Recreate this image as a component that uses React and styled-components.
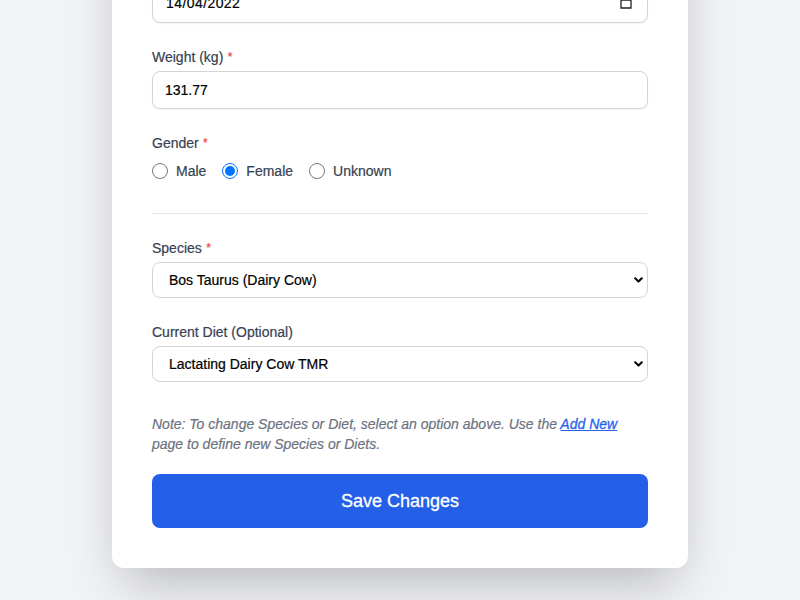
import React from "react";
import styled, { createGlobalStyle } from "styled-components";

const GlobalStyle = createGlobalStyle`
  *, *::before, *::after { box-sizing: border-box; }
  html, body { margin: 0; height: 100%; overflow: hidden; background: #f2f3f5; }
  body {
    font-family: "Liberation Sans", Arial, sans-serif;
    color: #374151;
    -webkit-text-stroke: 0.2px currentColor;
  }
`;

const Page = styled.main`
  display: flex;
  justify-content: center;
  align-items: flex-end;
  height: 600px;
  padding-bottom: 32px;
  overflow: hidden;
  background: #f2f3f5;
`;

const Card = styled.form`
  flex: none;
  display: flex;
  flex-direction: column;
  width: 576px;
  height: 700px;
  padding: 0 40px 40px;
  justify-content: flex-end;
  background: #fff;
  border-radius: 12px;
  box-shadow: 0 25px 50px -12px rgba(0, 0, 0, 0.25);
`;

const Field = styled.div`
  display: flex;
  flex-direction: column;
  margin-bottom: ${(p) => p.$gap}px;
`;

const Label = styled.span`
  font-size: 14px;
  line-height: 20px;
  color: #374151;
  margin-bottom: 4px;
`;

const Required = styled.span`
  display: inline-block;
  font-size: 12px;
  line-height: 12px;
  vertical-align: top;
  padding: 4px 0 0 0.5px;
  color: #ef4444;
`;

const InputBox = styled.div`
  display: flex;
  align-items: center;
  justify-content: space-between;
  height: 38px;
  padding: 0 12px;
  font-size: 14px;
  color: #000;
  background: #fff;
  border: 1px solid #d1d5db;
  border-radius: 8px;
  box-shadow: 0 1px 2px rgba(0, 0, 0, 0.05);
`;

const DateBox = styled(InputBox)`
  height: 40px;
  padding: 0 15px 0 13px;
  letter-spacing: 0.42px;
`;

const SelectBox = styled(InputBox)`
  height: 36px;
  padding: 0 4px 0 16px;
  box-shadow: none;
`;

const RadioGroup = styled.div`
  display: flex;
  gap: 16px;
  margin-top: 4px;
`;

const RadioLabel = styled.label`
  display: flex;
  align-items: center;
  gap: 8px;
  font-size: 14px;
  line-height: 20px;
`;

const Dot = styled.span`
  display: grid;
  place-items: center;
  width: 16px;
  height: 16px;
  border-radius: 50%;
  border: 1px solid ${(p) => (p.$on ? "#0075ff" : "#767676")};
  background: #fff;
  &::after {
    content: "";
    width: 10px;
    height: 10px;
    border-radius: 50%;
    background: ${(p) => (p.$on ? "#0075ff" : "transparent")};
  }
`;

const Divider = styled.div`
  height: 1px;
  background: #e5e7eb;
  margin-bottom: 24px;
`;

const Note = styled.p`
  margin: 0 0 20px;
  font-size: 14px;
  line-height: 20px;
  font-style: italic;
  color: #6b7280;
`;

const NoteLink = styled.a`
  color: #2563eb;
  text-decoration: underline;
  -webkit-text-stroke: 0.3px currentColor;
`;

const SaveButton = styled.button`
  height: 54px;
  border: 0;
  border-radius: 8px;
  background: #2460e7;
  color: #fff;
  font: 18px/28px "Liberation Sans", Arial, sans-serif;
  -webkit-text-stroke: 0.3px currentColor;
`;

const Chevron = () => (
  <svg width="9" height="6" viewBox="0 0 9 6" fill="none" stroke="#000" strokeWidth="2" strokeLinecap="round" strokeLinejoin="round">
    <path d="M1.2 1.2l3.3 3.3 3.3-3.3" />
  </svg>
);

const CalendarIcon = () => (
  <svg width="12" height="13" viewBox="0 0 12 13" fill="none" stroke="#222" strokeWidth="1.3">
    <path d="M1 1.2h10v9.8H1z M1 3h10" />
  </svg>
);

const genders = ["Male", "Female", "Unknown"];

export default function App() {
  return (
    <>
      <GlobalStyle />
      <Page>
        <Card>
          <Field $gap={24}>
            <DateBox>14/04/2022 <CalendarIcon /></DateBox>
          </Field>
          <Field $gap={24}>
            <Label>Weight (kg) <Required>*</Required></Label>
            <InputBox>131.77</InputBox>
          </Field>
          <Field $gap={32}>
            <Label>Gender <Required>*</Required></Label>
            <RadioGroup>
              {genders.map((g) => (
                <RadioLabel key={g}><Dot $on={g === "Female"} />{g}</RadioLabel>
              ))}
            </RadioGroup>
          </Field>
          <Divider />
          <Field $gap={24}>
            <Label>Species <Required>*</Required></Label>
            <SelectBox>Bos Taurus (Dairy Cow)<Chevron /></SelectBox>
          </Field>
          <Field $gap={32}>
            <Label>Current Diet (Optional)</Label>
            <SelectBox>Lactating Dairy Cow TMR<Chevron /></SelectBox>
          </Field>
          <Note>
            Note: To change Species or Diet, select an option above. Use the{" "}
            <NoteLink>Add New</NoteLink> page to define new Species or Diets.
          </Note>
          <SaveButton type="button">Save Changes</SaveButton>
        </Card>
      </Page>
    </>
  );
}
